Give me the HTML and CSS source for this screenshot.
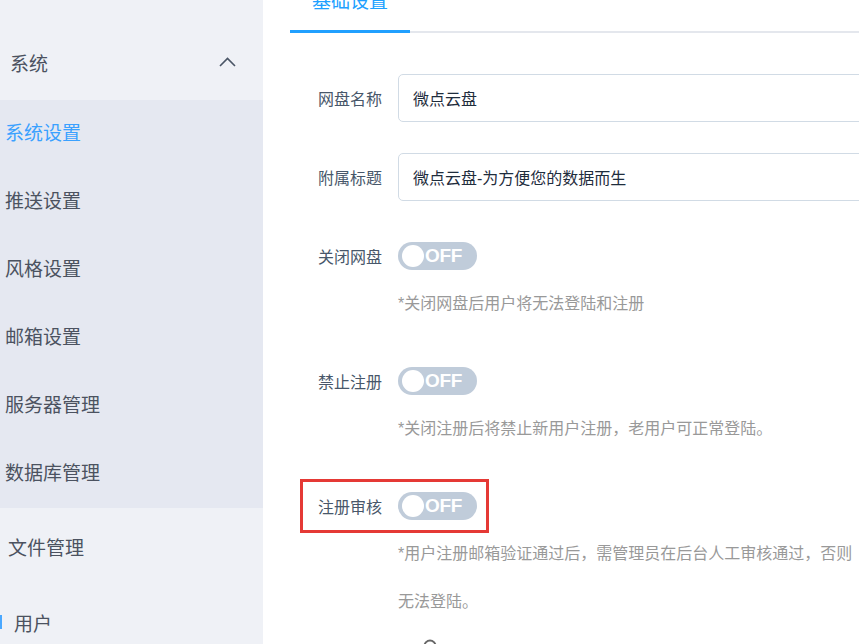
FILE: index.html
```html
<!DOCTYPE html>
<html lang="zh-CN">
<head>
    <meta charset="UTF-8">
    <meta name="viewport" content="width=device-width, initial-scale=1.0">
    <title>微点云盘 - 系统设置</title>
    <link rel="stylesheet" href="styles.css">
</head>
<body>
    <div class="layout">
        <aside class="sidebar">
            <div class="menu-title">
                <span>系统</span>
                <svg class="chevron" width="17" height="10" viewBox="0 0 17 10"><path d="M1 9 L8.5 1.5 L16 9" fill="none" stroke="#4a5566" stroke-width="1.6"/></svg>
            </div>
            <ul class="submenu">
                <li class="active">系统设置</li>
                <li>推送设置</li>
                <li>风格设置</li>
                <li>邮箱设置</li>
                <li>服务器管理</li>
                <li>数据库管理</li>
            </ul>
            <div class="menu-item file">文件管理</div>
            <div class="menu-item user"><span class="bar"></span>用户</div>
        </aside>

        <main class="main">
            <div class="tabs">
                <span class="tab active">基础设置</span>
            </div>

            <form class="form">
                <div class="form-item">
                    <label class="label">网盘名称</label>
                    <input class="input" type="text" value="微点云盘">
                </div>
                <div class="form-item">
                    <label class="label">附属标题</label>
                    <input class="input" type="text" value="微点云盘-为方便您的数据而生">
                </div>
                <div class="form-item switch-row">
                    <label class="label">关闭网盘</label>
                    <span class="switch"><span class="knob"></span><span class="switch-text">OFF</span></span>
                </div>
                <div class="hint">*关闭网盘后用户将无法登陆和注册</div>
                <div class="form-item switch-row">
                    <label class="label">禁止注册</label>
                    <span class="switch"><span class="knob"></span><span class="switch-text">OFF</span></span>
                </div>
                <div class="hint">*关闭注册后将禁止新用户注册，老用户可正常登陆。</div>
                <div class="form-item switch-row">
                    <div class="mark">
                        <label class="label">注册审核</label>
                        <span class="switch"><span class="knob"></span><span class="switch-text">OFF</span></span>
                    </div>
                </div>
                <div class="hint last">*用户注册邮箱验证通过后，需管理员在后台人工审核通过，否则无法登陆。</div>
                <div class="help">
                    <svg width="14" height="14" viewBox="0 0 14 14"><circle cx="7" cy="7" r="5.5" fill="none" stroke="#666" stroke-width="2"/></svg>
                </div>
            </form>
        </main>
    </div>
</body>
</html>
```

FILE: styles.css
```css
html,body{margin:0;padding:0;height:644px;overflow:hidden}
body{font-family:"Liberation Sans","Noto Sans CJK SC",sans-serif;background:#fff}
.layout{display:flex;height:644px}

.sidebar{width:263px;flex:none;background:#eff1f6;padding-top:24px;font-size:19px;color:#4b5260;overflow:hidden}
.menu-title{height:76px;display:flex;align-items:center;justify-content:space-between;padding:0 27px 0 10px}
.submenu{list-style:none;margin:0;padding:0;background:#e5e8f1}
.submenu li{height:68px;line-height:68px;padding-left:5px}
.submenu li.active{color:#3aa1ff}
.menu-item{height:76px;display:flex;align-items:center;padding-left:8px}
.menu-item.user{padding-left:0}
.menu-item .bar{width:2px;height:14px;background:#4aa8ff;margin-right:12px}

.main{flex:1;min-width:0;padding-left:27px;overflow:hidden}
.tabs{display:flex;margin-top:-18px;border-bottom:2px solid #e4e7ed}
.tab{line-height:40px;padding:0 22px 8px;font-size:19px;color:#20a0ff;border-bottom:3px solid #20a0ff;margin-bottom:-2px}

.form{margin:41px 0 0 10px;width:900px}
.form-item{display:flex;align-items:center;height:48px;margin-bottom:31px}
.form-item.switch-row{margin-bottom:0}
.label{width:98px;flex:none;box-sizing:border-box;text-align:right;padding-right:16px;font-size:16px;color:#48576a}
.input{width:520px;height:48px;box-sizing:border-box;border:1px solid #d1dbe5;border-radius:5px;padding:0 14px;font-size:16px;font-family:inherit;color:#1f2d3d;outline:none}

.switch{width:79px;height:28px;flex:none;box-sizing:border-box;border-radius:14px;background:#c0ccda;display:flex;align-items:center;padding-left:4px}
.knob{width:22px;height:22px;border-radius:50%;background:#fff}
.switch-text{margin-left:1px;font-size:19px;font-weight:bold;color:#fff;letter-spacing:-0.3px}

.hint{margin-left:98px;width:470px;line-height:48px;font-size:16px;color:#999;margin-bottom:29px}
.hint.last{margin-bottom:0}

.mark{display:flex;align-items:center;height:48px;border:3px solid #e53935;margin:-3px 0;padding-right:9px}
.mark .label{width:95px}

.help{margin:13px 0 0 123px;height:14px}
.help svg{display:block}
```
